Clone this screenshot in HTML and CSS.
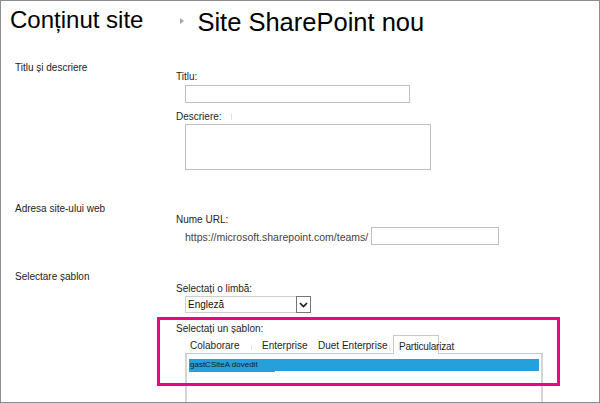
FILE: index.html
```html
<!DOCTYPE html>
<html lang="ro">
<head>
    <meta charset="UTF-8">
    <meta name="viewport" content="width=device-width, initial-scale=1.0">
    <title>Site SharePoint nou</title>
    <link rel="stylesheet" href="styles.css">
</head>
<body>
    <div class="page">
        <div class="page-header">
            <h1 class="crumb">Conținut site</h1>
            <span class="crumb-arrow"></span>
            <h1 class="crumb crumb-current">Site SharePoint nou</h1>
        </div>

        <div class="section section-title">
            <div class="section-label">Titlu și descriere</div>
            <div class="section-body">
                <label class="field-label">Titlu:</label>
                <input type="text" class="text-input title-input">
                <label class="field-label desc-label">Descriere:<span class="dim-mark"></span></label>
                <textarea class="text-area"></textarea>
            </div>
        </div>

        <div class="section section-url">
            <div class="section-label">Adresa site-ului web</div>
            <div class="section-body">
                <label class="field-label">Nume URL:</label>
                <div class="url-row">
                    <span class="url-prefix">https://microsoft.sharepoint.com/teams/</span>
                    <input type="text" class="text-input url-input">
                </div>
            </div>
        </div>

        <div class="section section-template">
            <div class="section-label">Selectare șablon</div>
            <div class="section-body">
                <label class="field-label">Selectați o limbă:</label>
                <div class="lang-select">
                    <span class="lang-value">Engleză</span>
                    <span class="select-arrow">
                        <svg width="9" height="6" viewBox="0 0 9 6"><path d="M1 1 L4.5 4.6 L8 1" fill="none" stroke="#1a1a1a" stroke-width="1.6"/></svg>
                    </span>
                </div>

                <div class="template-picker">
                    <label class="field-label">Selectați un șablon:</label>
                    <div class="tabs">
                        <span class="tab tab-colab">Colaborare</span>
                        <span class="tab-tick"></span>
                        <span class="tab tab-ent">Enterprise</span>
                        <span class="tab tab-duet">Duet Enterprise</span>
                        <span class="tab-tick"></span>
                        <span class="tab tab-active">Particularizat</span>
                    </div>
                    <div class="template-list">
                        <div class="template-item">
                            <span class="template-name">gastCSiteA dovedit</span>
                        </div>
                    </div>
                    <div class="highlight-box"></div>
                </div>
            </div>
        </div>
    </div>
</body>
</html>
```

FILE: styles.css
```css
* {
    margin: 0;
    padding: 0;
    box-sizing: border-box;
}

html, body {
    width: 600px;
    height: 403px;
    overflow: hidden;
    background: #fff;
}

body {
    font-family: "Liberation Sans", Arial, sans-serif;
    color: #1e1e1e;
}

.page {
    height: 403px;
    border: 1px solid #8c8c8c;
    overflow: hidden;
}

/* header */
.page-header {
    display: flex;
    align-items: flex-start;
    height: 40px;
}

.crumb {
    font-weight: normal;
    font-size: 24px;
    line-height: 30px;
    margin-top: 4px;
    margin-left: 9px;
    color: #000;
    white-space: nowrap;
}

.crumb-arrow {
    width: 0;
    height: 0;
    border-left: 4px solid #a6a6a6;
    border-top: 3.5px solid transparent;
    border-bottom: 3.5px solid transparent;
    margin-left: 37px;
    margin-top: 17px;
}

.crumb-current {
    font-size: 25.5px;
    margin-top: 6px;
    margin-left: 13px;
}

/* sections */
.section {
    display: flex;
}

.section-label {
    width: 175px;
    padding-left: 14px;
    font-size: 10px;
    line-height: 12px;
    color: #222;
}

.section-body {
    flex: 1;
}

.section-title {
    margin-top: 21px;
}

.section-title .section-body {
    padding-top: 9px;
}

.section-url {
    margin-top: 33px;
}

.section-url .section-body {
    padding-top: 11px;
}

.section-template {
    margin-top: 26px;
}

.section-template .section-body {
    padding-top: 12px;
}

.field-label {
    display: block;
    font-size: 10px;
    line-height: 12px;
    color: #1e1e1e;
}

.text-input, .text-area {
    display: block;
    border: 1px solid #c0c0c0;
    background: #fff;
    outline: none;
    font-family: inherit;
}

.title-input {
    margin: 2px 0 0 9px;
    width: 225px;
    height: 18px;
}

.desc-label {
    margin-top: 8px;
}

.dim-mark {
    display: inline-block;
    width: 1px;
    height: 6px;
    margin-left: 9px;
    background: #e2e2e2;
}

.text-area {
    margin: 1px 0 0 9px;
    width: 246px;
    height: 46px;
    resize: none;
}

/* url */
.url-row {
    display: flex;
    align-items: center;
    margin: 1px 0 0 9px;
}

.url-prefix {
    font-size: 10.5px;
    line-height: 12px;
    padding-top: 2px;
    color: #444;
    white-space: nowrap;
}

.url-input {
    width: 128px;
    height: 18px;
    margin-left: 3px;
}

/* language select */
.lang-select {
    display: flex;
    margin: 1px 0 0 9px;
    width: 126px;
    height: 17px;
    border: 1px solid #cfcfcf;
}

.lang-value {
    font-size: 10px;
    line-height: 15px;
    padding-left: 2px;
    color: #111;
}

.select-arrow {
    display: flex;
    align-items: center;
    justify-content: center;
    margin: -1px -1px -1px auto;
    width: 15px;
    height: 17px;
    border: 1px solid #767676;
    background: #fff;
}

/* template picker */
.template-picker {
    position: relative;
    margin-top: 10px;
}

.tabs {
    display: flex;
    height: 18px;
    margin-left: 14px;
    font-size: 10px;
    line-height: 12px;
}

.tab {
    padding-top: 5px;
    white-space: nowrap;
    color: #1e1e1e;
}

.tab-colab {
    width: 61px;
}

.tab-tick {
    width: 1px;
    height: 5px;
    margin-top: 10px;
    background: #e4e4e4;
}

.tab-ent {
    margin-left: 10px;
    width: 56px;
}

.tab-duet {
    width: 71px;
}

.tab-active {
    position: relative;
    z-index: 1;
    margin-left: 3px;
    width: 46px;
    height: 19px;
    padding-left: 5px;
    background: #fff;
    border: 1px solid #c9c9c9;
    border-bottom: none;
    letter-spacing: -0.2px;
}

.template-list {
    margin-left: 9px;
    width: 358px;
    height: 60px;
    border-top: 1px solid #c9c9c9;
    border-left: 2px solid #d5d5d5;
    border-right: 2px solid #d5d5d5;
}

.template-item {
    display: flex;
    align-items: flex-start;
    margin: 5px 2px 0;
    height: 12px;
    background: #26a0da;
}

.template-name {
    width: 86px;
    height: 13px;
    padding-left: 1px;
    font-size: 8px;
    line-height: 12px;
    color: #1a1a1a;
    background: #26a0da;
    white-space: nowrap;
}

/* annotation frame over the template picker */
.highlight-box {
    position: absolute;
    left: -19px;
    top: -6px;
    width: 403px;
    height: 69px;
    border: 3px solid #e5097f;
    pointer-events: none;
}
```
